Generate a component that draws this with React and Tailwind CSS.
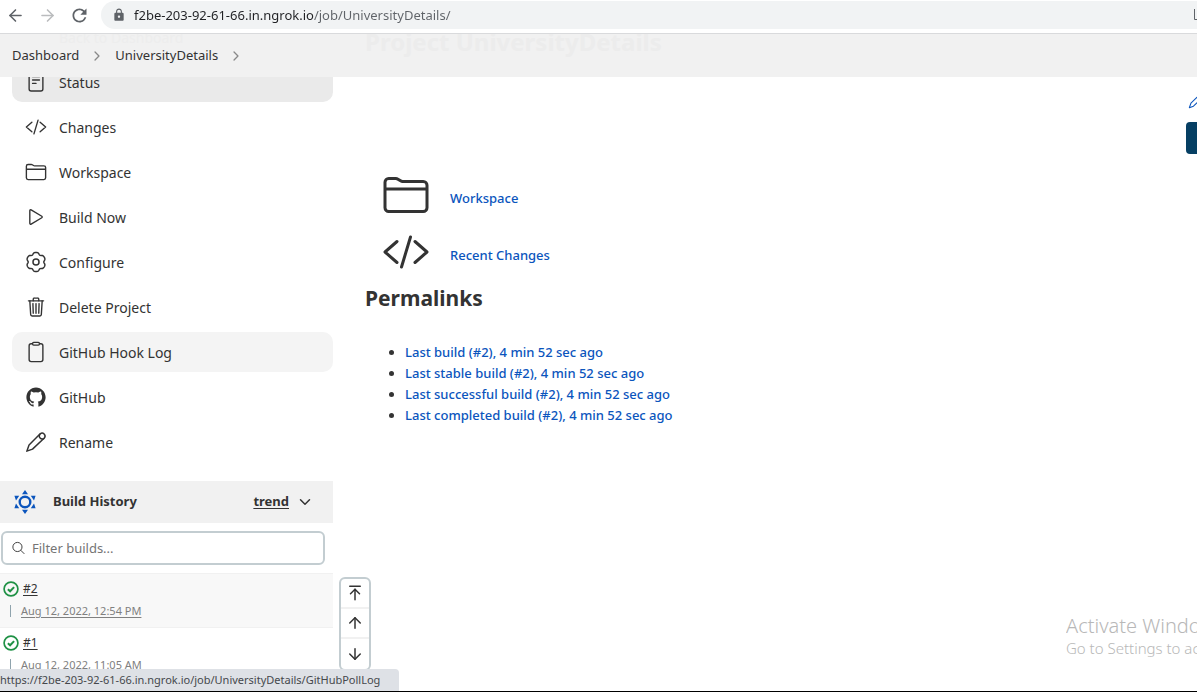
import {
  IoCodeSlashOutline, IoFolderOutline, IoPlayOutline, IoTrashOutline, IoClipboardOutline,
  IoLogoGithub, IoReaderOutline, IoSearchOutline, IoChevronForward, IoChevronDown,
} from 'react-icons/io5';
import { ArrowLeft, ArrowRight, ArrowUp, ArrowDown, ArrowUpToLine } from 'lucide-react';
import { MdRefresh, MdLock } from 'react-icons/md';

// Outline of a gear with six rounded lobes, centred in a 24x24 box.
const gearOutline = Array.from({ length: 120 }, (_, i) => {
  const t = (i / 120) * Math.PI * 2;
  const r = 9.7 + 0.95 * Math.cos(6 * t) - 0.25 * Math.cos(12 * t);
  return `${(12 + r * Math.sin(t)).toFixed(2)},${(12 - r * Math.cos(t)).toFixed(2)}`;
}).join(' ');

function Gear({ className }) {
  return (
    <svg viewBox="0 0 24 24" className={className} fill="none" stroke="currentColor" strokeWidth="1.6" strokeLinejoin="round" aria-hidden="true">
      <polygon points={gearOutline} />
      <circle cx="12" cy="12" r="3.3" />
    </svg>
  );
}

function Pen({ className }) {
  return (
    <svg viewBox="0 0 24 24" className={className} fill="none" stroke="currentColor" strokeWidth="1.6" strokeLinejoin="round" strokeLinecap="round" aria-hidden="true">
      <path d="M16.6 3.1a3.2 3.2 0 0 1 4.5 4.5L8.2 19.8 2 22 4.4 15.3Z" />
      <path d="M16.2 3.6a3.2 3.2 0 0 0 4.3 4.6" />
    </svg>
  );
}

function SunIcon() {
  return (
    <svg viewBox="0 0 24 26" className="h-[26px] w-6" fill="#0b55bd" aria-hidden="true">
      <circle cx="12" cy="13" r="5.3" fill="none" stroke="#0b55bd" strokeWidth="2.4" />
      <path d="M12 1l3 4.2H9zM12 25l3-4.2H9zM1.4 6.8h4.8L3 11.6zM22.6 6.8h-4.8L21 11.6zM1.4 19.2h4.8L3 14.4zM22.6 19.2h-4.8l3.2-4.8z" />
    </svg>
  );
}

function SuccessIcon() {
  return (
    <svg viewBox="0 0 16 16" className="h-4 w-4" fill="none" stroke="#1f9145" aria-label="Success" role="img">
      <circle cx="8" cy="8" r="6.9" strokeWidth="1.7" />
      <path d="M4.9 8.2l2.2 2.1 4-4.2" strokeWidth="2" />
    </svg>
  );
}

const tasks = [
  { label: 'Status', Icon: IoReaderOutline, tone: 'bg-[#eaeaea]' },
  { label: 'Changes', Icon: IoCodeSlashOutline },
  { label: 'Workspace', Icon: IoFolderOutline },
  { label: 'Build Now', Icon: IoPlayOutline },
  { label: 'Configure', Icon: Gear },
  { label: 'Delete Project', Icon: IoTrashOutline },
  { label: 'GitHub Hook Log', Icon: IoClipboardOutline, tone: 'bg-[#f4f4f4]' },
  { label: 'GitHub', Icon: IoLogoGithub },
  { label: 'Rename', Icon: Pen },
];

const builds = [
  { id: '#2', date: 'Aug 12, 2022, 12:54 PM', tone: 'bg-[#f8f8f8]' },
  { id: '#1', date: 'Aug 12, 2022, 11:05 AM', tone: 'bg-white' },
];

const permalinks = [
  'Last build (#2), 4 min 52 sec ago',
  'Last stable build (#2), 4 min 52 sec ago',
  'Last successful build (#2), 4 min 52 sec ago',
  'Last completed build (#2), 4 min 52 sec ago',
];

function BrowserBar() {
  return (
    <div className="flex h-[34px] shrink-0 items-start border-b border-[#d9dadc] bg-white pt-px text-[#5f6368]">
      <div className="flex h-7 items-center gap-3 pl-[5px]">
        <button aria-label="Back" className="grid size-5 place-items-center"><ArrowLeft size={19} /></button>
        <button aria-label="Forward" className="grid size-5 place-items-center text-[#babcbe]"><ArrowRight size={19} /></button>
        <button aria-label="Reload" className="grid size-5 place-items-center"><MdRefresh size={21} /></button>
      </div>
      <div className="ml-3 flex h-7 flex-1 items-center gap-2 overflow-hidden rounded-l-full bg-[#f1f3f4] pl-[11px]">
        <MdLock size={14} />
        <input
          aria-label="Address"
          className="min-w-0 flex-1 bg-linear-to-r from-[#202124] from-[180px] to-[#5f6368] to-[180px] bg-clip-text pt-0.5 text-[13px] text-transparent outline-none"
          defaultValue="f2be-203-92-61-66.in.ngrok.io/job/UniversityDetails/"
        />
        <svg viewBox="0 0 3 12" className="h-3 w-[3px]" aria-hidden="true"><path d="M.5 0v10.5H3" fill="none" stroke="#5f6368" /></svg>
      </div>
    </div>
  );
}

function Breadcrumbs() {
  return (
    <nav aria-label="Breadcrumb" className="relative flex h-[43px] shrink-0 items-center overflow-hidden bg-[#f1f1f1] text-[13px]">
      <div aria-hidden="true" className="absolute left-[59px] top-0 -mt-1 text-sm leading-4 text-[#ededed]">Back to Dashboard</div>
      <div aria-hidden="true" className="absolute left-[365px] top-0 -mt-2 text-2xl font-bold text-[#ececec]">Project UniversityDetails</div>
      <ol className="relative flex items-center gap-[11px] pl-3 pt-px">
        <li><a href="#dashboard">Dashboard</a></li>
        <li aria-hidden="true"><IoChevronForward className="size-3.5 text-[#888]" /></li>
        <li><a href="#project">UniversityDetails</a></li>
        <li aria-hidden="true"><IoChevronForward className="size-3.5 text-[#888]" /></li>
      </ol>
    </nav>
  );
}

function Sidebar() {
  return (
    <aside className="w-[333px] shrink-0">
      <nav aria-label="Project" className="-mt-[15px] flex flex-col gap-[5px] pl-3">
        {tasks.map(({ label, Icon, tone }) => (
          <a key={label} href="#task" className={`flex h-10 items-center gap-3 rounded-[10px] pl-[13px] text-sm ${tone || ''}`}>
            <Icon className="size-[22px]" />
            <span className="pt-px">{label}</span>
          </a>
        ))}
      </nav>
      <section className="mt-[19px]">
        <div className="flex h-[42px] items-center bg-[#f1f1f1] pl-[13px] pr-5 text-[13px] font-bold">
          <SunIcon />
          <h2 className="ml-4 flex-1">Build History</h2>
          <a href="#trend" className="underline underline-offset-2">trend</a>
          <button aria-label="Collapse build history" className="ml-2"><IoChevronDown className="size-4" /></button>
        </div>
        <label className="ml-px mr-2 mt-2 flex h-[34px] items-center gap-1.5 rounded-md border-2 border-[#c3cdd1] pl-2">
          <IoSearchOutline className="size-4" />
          <input aria-label="Filter builds" placeholder="Filter builds..." className="w-full bg-transparent pt-px text-[13px] outline-none placeholder:text-[#757575]" />
        </label>
        <ul className="mt-2">
          {builds.map((b) => (
            <li key={b.id} className={`h-[54px] border-t border-[#f1f1f1] pl-[3px] pt-1.5 ${b.tone}`}>
              <div className="flex h-[18px] items-center gap-1 text-xs">
                <SuccessIcon />
                <a href="#build" className="underline underline-offset-2">{b.id}</a>
              </div>
              <div className="mt-1 flex h-[18px] items-center gap-2.5 pl-[7px] text-[11px] text-[#808080]">
                <span className="h-3 w-px bg-[#8fa3ad]" />
                <a href="#build" className="underline underline-offset-2">{b.date}</a>
              </div>
            </li>
          ))}
        </ul>
      </section>
    </aside>
  );
}

function Pager() {
  return (
    <div className="absolute bottom-[21px] left-[339px] flex w-8 flex-col divide-y-2 divide-[#f1f1f1] rounded-md border-2 border-[#c3cdd1] bg-white">
      <button aria-label="Newest" className="grid h-[30px] place-items-center"><ArrowUpToLine size={18} /></button>
      <button aria-label="Newer" className="grid h-[30px] place-items-center"><ArrowUp size={18} /></button>
      <button aria-label="Older" className="grid h-[30px] place-items-center"><ArrowDown size={18} /></button>
    </div>
  );
}

export default function App() {
  return (
    <div className="relative flex h-screen flex-col overflow-hidden bg-white font-['Noto_Sans',sans-serif] text-[#333]">
      <BrowserBar />
      <Breadcrumbs />
      <div className="flex min-h-0 flex-1 overflow-hidden">
        <Sidebar />
        <main className="min-w-0 flex-1 pl-8 pt-[89px] text-[13px] font-medium text-[#0b55bd]">
          <div className="flex h-[57px] items-center gap-5 pl-[17px]">
            <IoFolderOutline className="size-12 text-[#333]" />
            <a href="#workspace" className="pt-2">Workspace</a>
          </div>
          <div className="flex h-[57px] items-center gap-5 pl-[17px]">
            <IoCodeSlashOutline className="size-12 text-[#333]" />
            <a href="#changes" className="pt-2">Recent Changes</a>
          </div>
          <h2 className="pt-px text-[21px] font-bold leading-[34px] text-[#333]">Permalinks</h2>
          <ul className="mt-[27px] list-disc pl-10 leading-[21px] marker:text-[#333]">
            {permalinks.map((p) => <li key={p}><a href="#permalink">{p}</a></li>)}
          </ul>
        </main>
        <div className="w-[11px] shrink-0 overflow-hidden pt-4">
          <a href="#describe" aria-label="Edit description" className="ml-0.5 block w-4 text-[#0b55bd]"><Pen className="size-4" /></a>
          <button aria-label="Disable project" className="mt-[13px] h-8 w-32 rounded bg-[#063f63]" />
        </div>
      </div>
      <Pager />
      <div className="absolute bottom-[34px] right-0 w-[131px] overflow-hidden whitespace-nowrap text-[#b8b8b8]">
        <p className="text-xl font-light leading-6">Activate Windows</p>
        <p className="text-[15px] font-light leading-5">Go to Settings to activate Windows.</p>
      </div>
      <div className="absolute bottom-px left-0 flex h-[22px] min-w-[399px] items-center whitespace-nowrap rounded-tr bg-[#dee1e6] pr-2 pt-px text-[11px] text-[#45484c]">
        <span>https://f2be-203-92-61-66.in.ngrok.io/job/UniversityDetails/GitHubPollLog</span>
      </div>
      <div className="absolute inset-x-0 bottom-0 h-px bg-black" />
    </div>
  );
}
